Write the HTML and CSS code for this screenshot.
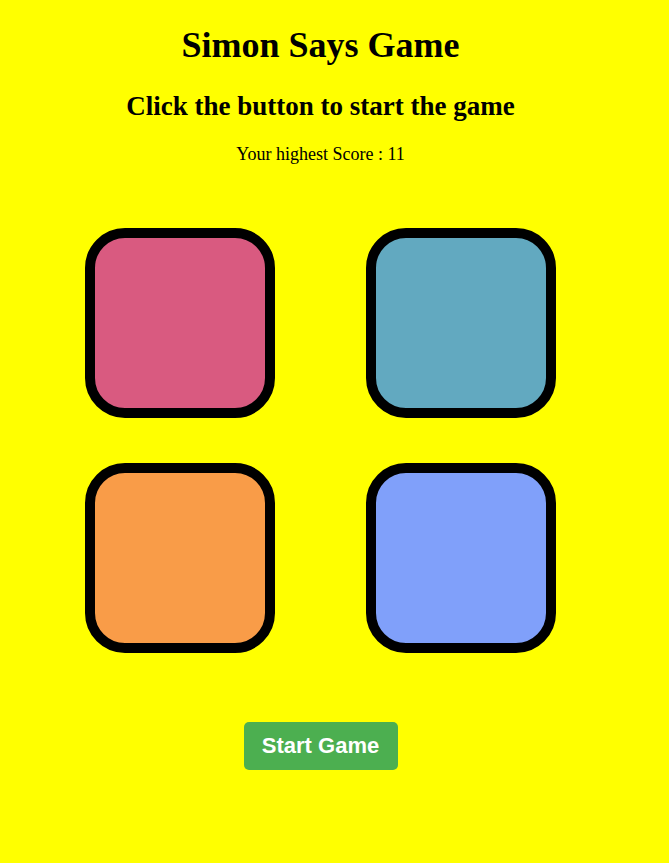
FILE: index.html
```html
<!DOCTYPE html>
<html lang="en">
<head>
<meta charset="UTF-8">
<title>Simon Says Game</title>
<link rel="stylesheet" href="styles.css">
</head>
<body>
<main class="page">
  <h1 class="title">Simon Says Game</h1>
  <h2 class="subtitle">Click the button to start the game</h2>
  <p class="score">Your highest Score : 11</p>
  <div class="board">
    <div class="row">
      <div class="pad pad-red"></div>
      <div class="pad pad-teal"></div>
    </div>
    <div class="row">
      <div class="pad pad-orange"></div>
      <div class="pad pad-blue"></div>
    </div>
  </div>
  <div class="actions">
    <button class="start-btn">Start Game</button>
  </div>
</main>
</body>
</html>
```

FILE: styles.css
```css
html, body {
  margin: 0;
  padding: 0;
  background: #ffff00;
}

body {
  font-family: "Liberation Serif", "Times New Roman", serif;
  color: #000;
}

.page {
  width: 641px;
  padding-top: 25px;
  text-align: center;
}

.title {
  font-size: 36px;
  line-height: 41px;
  font-weight: bold;
  margin: 0;
}

.subtitle {
  font-size: 27px;
  line-height: 31px;
  font-weight: bold;
  margin: 25px 0 0;
}

.score {
  font-size: 18px;
  line-height: 21px;
  margin: 22px 0 0;
}

.board {
  margin-top: 63px;
  display: flex;
  flex-direction: column;
  align-items: center;
  gap: 45px;
}

.row {
  display: flex;
  gap: 91px;
}

.pad {
  width: 170px;
  height: 170px;
  border: 10px solid #000;
  border-radius: 40px;
}

.pad-red { background: #d95a80; }
.pad-teal { background: #62a9c0; }
.pad-orange { background: #f99c48; }
.pad-blue { background: #80a0fa; }

.actions {
  margin-top: 69px;
  display: flex;
  justify-content: center;
}

.start-btn {
  font-family: "Liberation Sans", Arial, sans-serif;
  font-size: 22px;
  font-weight: bold;
  line-height: 26px;
  color: #fff;
  background: #4caf50;
  border: none;
  border-radius: 5px;
  padding: 11px 18px;
  width: 154px;
  height: 48px;
  cursor: pointer;
}
```
